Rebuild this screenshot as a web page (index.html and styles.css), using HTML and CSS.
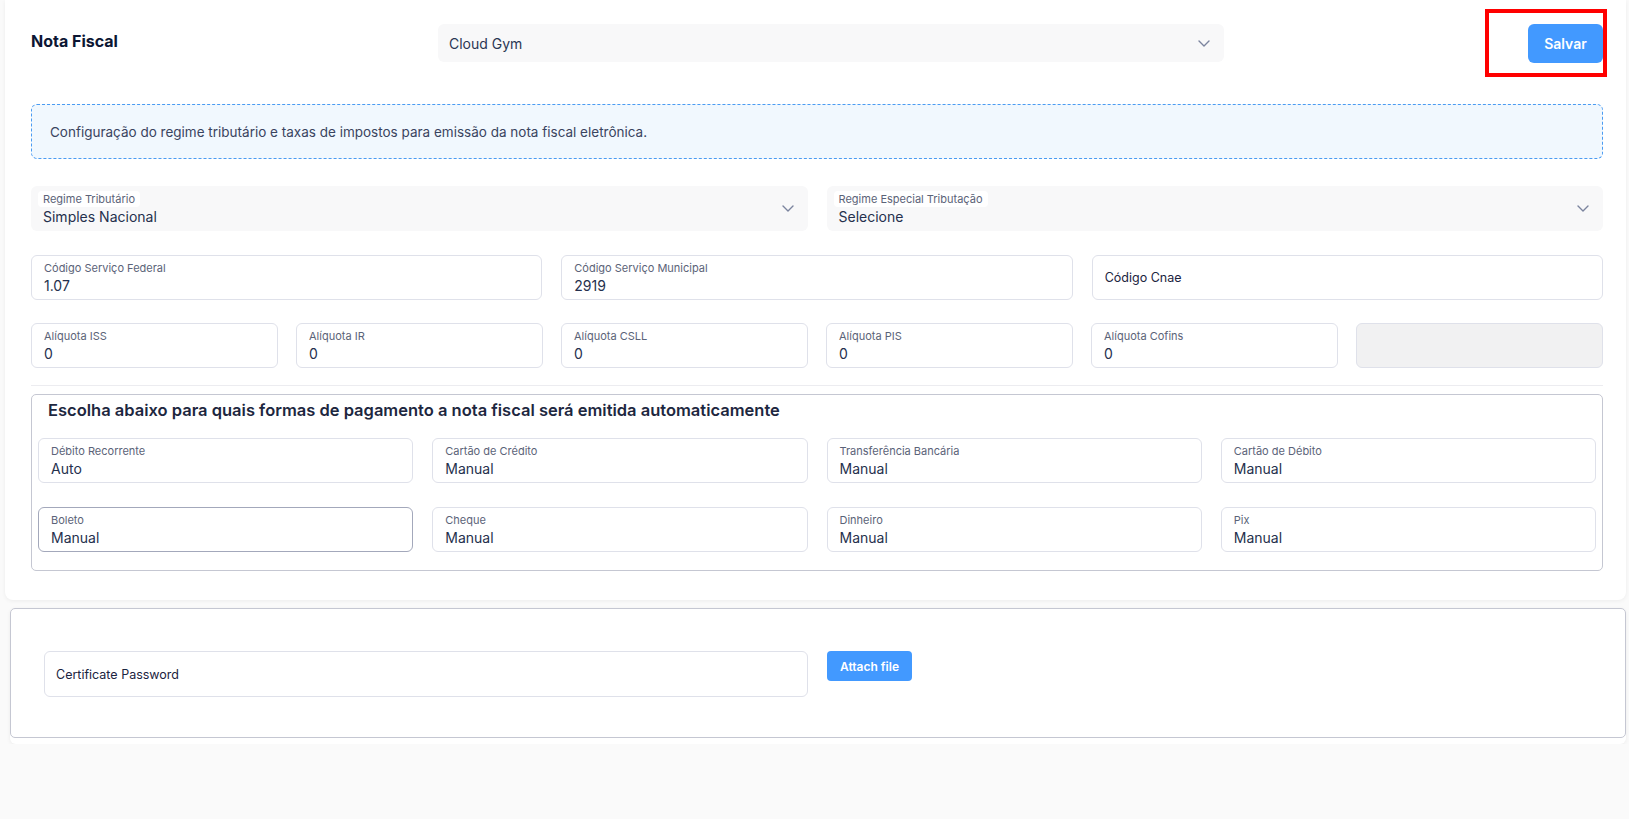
FILE: index.html
```html
<!DOCTYPE html>
<html lang="pt-BR">
<head>
<meta charset="utf-8">
<title>Nota Fiscal</title>
<link rel="stylesheet" href="styles.css">
</head>
<body>
<div class="page">
  <section class="card main">
    <header class="top">
      <h1 class="title">Nota Fiscal</h1>
      <div class="select plain">
        <span class="select-value">Cloud Gym</span>
        <svg class="chev" viewBox="0 0 12 7" width="12" height="7"><path d="M1 1l5 5 5-5" fill="none" stroke="currentColor" stroke-width="1.4" stroke-linecap="round" stroke-linejoin="round"/></svg>
      </div>
      <div class="save-wrap">
        <button class="btn btn-save" type="button">Salvar</button>
      </div>
    </header>

    <div class="info">Configuração do regime tributário e taxas de impostos para emissão da nota fiscal eletrônica.</div>

    <div class="grid g2 row-a">
      <div class="select field-select">
        <div class="fs-text">
          <span class="pill">Regime Tributário</span>
          <span class="value">Simples Nacional</span>
        </div>
        <svg class="chev" viewBox="0 0 12 7" width="12" height="7"><path d="M1 1l5 5 5-5" fill="none" stroke="currentColor" stroke-width="1.4" stroke-linecap="round" stroke-linejoin="round"/></svg>
      </div>
      <div class="select field-select">
        <div class="fs-text">
          <span class="pill">Regime Especial Tributação</span>
          <span class="value">Selecione</span>
        </div>
        <svg class="chev" viewBox="0 0 12 7" width="12" height="7"><path d="M1 1l5 5 5-5" fill="none" stroke="currentColor" stroke-width="1.4" stroke-linecap="round" stroke-linejoin="round"/></svg>
      </div>
    </div>

    <div class="grid g3 row-b">
      <div class="field"><span class="label">Código Serviço Federal</span><span class="value">1.07</span></div>
      <div class="field"><span class="label">Código Serviço Municipal</span><span class="value">2919</span></div>
      <div class="field empty"><span class="placeholder">Código Cnae</span></div>
    </div>

    <div class="grid g6 row-c">
      <div class="field"><span class="label">Alíquota ISS</span><span class="value">0</span></div>
      <div class="field"><span class="label">Alíquota IR</span><span class="value">0</span></div>
      <div class="field"><span class="label">Alíquota CSLL</span><span class="value">0</span></div>
      <div class="field"><span class="label">Alíquota PIS</span><span class="value">0</span></div>
      <div class="field"><span class="label">Alíquota Cofins</span><span class="value">0</span></div>
      <div class="field disabled"></div>
    </div>

    <hr class="divider">

    <div class="pay">
      <h2 class="pay-title">Escolha abaixo para quais formas de pagamento a nota fiscal será emitida automaticamente</h2>
      <div class="grid g4 pay-grid">
        <div class="field"><span class="label">Débito Recorrente</span><span class="value">Auto</span></div>
        <div class="field"><span class="label">Cartão de Crédito</span><span class="value">Manual</span></div>
        <div class="field"><span class="label">Transferência Bancária</span><span class="value">Manual</span></div>
        <div class="field"><span class="label">Cartão de Débito</span><span class="value">Manual</span></div>
        <div class="field focused"><span class="label">Boleto</span><span class="value">Manual</span></div>
        <div class="field"><span class="label">Cheque</span><span class="value">Manual</span></div>
        <div class="field"><span class="label">Dinheiro</span><span class="value">Manual</span></div>
        <div class="field"><span class="label">Pix</span><span class="value">Manual</span></div>
      </div>
    </div>
  </section>

  <section class="card cert">
    <div class="cert-inner">
      <div class="field empty cert-field"><span class="placeholder">Certificate Password</span></div>
      <button class="btn btn-attach" type="button">Attach file</button>
    </div>
  </section>
</div>
</body>
</html>
```

FILE: styles.css
```css
* { box-sizing: border-box; }

html, body {
  margin: 0;
  padding: 0;
  background: #fafafa;
  font-family: Inter, "Noto Sans", "Liberation Sans", sans-serif;
  color: #1f2a44;
}

.page {
  padding: 0 3px 0 5px;
}

.card {
  background: #ffffff;
  border-radius: 8px;
  box-shadow: 0 1px 4px rgba(0, 0, 0, 0.06);
}

.main {
  padding: 24px 23px 29px 26px;
  border-top-left-radius: 0;
  border-top-right-radius: 0;
}

/* header */
.top {
  display: grid;
  grid-template-columns: 407px 786px 1fr;
  align-items: start;
  height: 38px;
}

.title {
  margin: 7px 0 0;
  font-size: 16px;
  line-height: 20px;
  font-weight: 700;
  color: #0c1633;
}

.select {
  display: flex;
  align-items: center;
  justify-content: space-between;
  background: #f8f8f9;
  border-radius: 6px;
}

.plain {
  height: 38px;
  padding: 0 14px 0 11px;
}

.select-value {
  font-size: 14px;
  color: #2b3654;
}

.chev {
  color: #7b849e;
  flex: none;
}

.save-wrap {
  justify-self: end;
  position: relative;
}

.save-wrap::after {
  content: "";
  position: absolute;
  top: -15px;
  bottom: -14px;
  left: -43px;
  right: -4px;
  border: 4px solid #ff0000;
  pointer-events: none;
}

.btn {
  border: 0;
  background: #4299ff;
  color: #ffffff;
  font-family: Inter, "Noto Sans", "Liberation Sans", sans-serif;
  font-weight: 600;
  cursor: pointer;
}

.btn-save {
  width: 75px;
  height: 39px;
  border-radius: 6px;
  font-size: 14px;
}

/* info */
.info {
  margin-top: 42px;
  height: 55px;
  display: flex;
  align-items: center;
  padding-left: 18px;
  background: #f1f8fe;
  border: 1px dashed #4a9bf2;
  border-radius: 6px;
  font-size: 13.5px;
  color: #3a4460;
}

/* grids */
.grid {
  display: grid;
  column-gap: 19px;
}
.g2 { grid-template-columns: repeat(2, 1fr); }
.g3 { grid-template-columns: repeat(3, 1fr); }
.g6 { grid-template-columns: repeat(6, 1fr); column-gap: 18px; }
.g4 { grid-template-columns: repeat(4, 1fr); }

.row-a { margin-top: 27px; }
.row-b { margin-top: 24px; }
.row-c { margin-top: 23px; }

.field-select {
  height: 45px;
  padding: 0 14px 0 7px;
}

.fs-text {
  display: flex;
  flex-direction: column;
  align-items: flex-start;
}

.pill {
  background: #ffffff;
  border-radius: 4px;
  padding: 1px 5px;
  font-size: 11px;
  line-height: 14px;
  color: #5b6378;
}

.fs-text .value {
  padding-left: 5px;
  margin-top: 0;
}

.field {
  height: 45px;
  border: 1px solid #dfe1ea;
  border-radius: 6px;
  background: #ffffff;
  padding: 5px 12px 0;
  display: flex;
  flex-direction: column;
}

.label {
  font-size: 11px;
  line-height: 14px;
  color: #5b6378;
}

.value {
  font-size: 14px;
  line-height: 20px;
  color: #25304d;
  margin-top: 1px;
}

.field.empty {
  padding-top: 0;
  justify-content: center;
}

.placeholder {
  font-size: 12.5px;
  color: #1b2440;
}

.field.disabled {
  background: #f1f1f2;
}

.field.focused {
  border-color: #a3a8bb;
}

.divider {
  margin: 17px 0 0;
  border: 0;
  border-top: 1px solid #ececf0;
}

/* payments */
.pay {
  margin-top: 8px;
  border: 1px solid #c5c7d2;
  border-radius: 5px;
  padding: 4px 6px 18px;
}

.pay-title {
  margin: 0 0 17px 10px;
  font-size: 16.5px;
  line-height: 22px;
  font-weight: 600;
  color: #1d2740;
}

.pay-grid {
  row-gap: 24px;
}

/* certificate */
.cert {
  margin-top: 8px;
  margin-left: 5px;
  margin-right: 0;
  padding-bottom: 6px;
  border-radius: 6px;
}

.cert-inner {
  border: 1px solid #c5c7d2;
  border-radius: 5px;
  height: 130px;
  padding: 42px 0 0 33px;
  display: flex;
  align-items: flex-start;
  gap: 19px;
}

.cert-field {
  width: 764px;
  height: 46px;
  padding-left: 11px;
}

.btn-attach {
  width: 85px;
  height: 30px;
  border-radius: 4px;
  font-size: 12px;
}
```
